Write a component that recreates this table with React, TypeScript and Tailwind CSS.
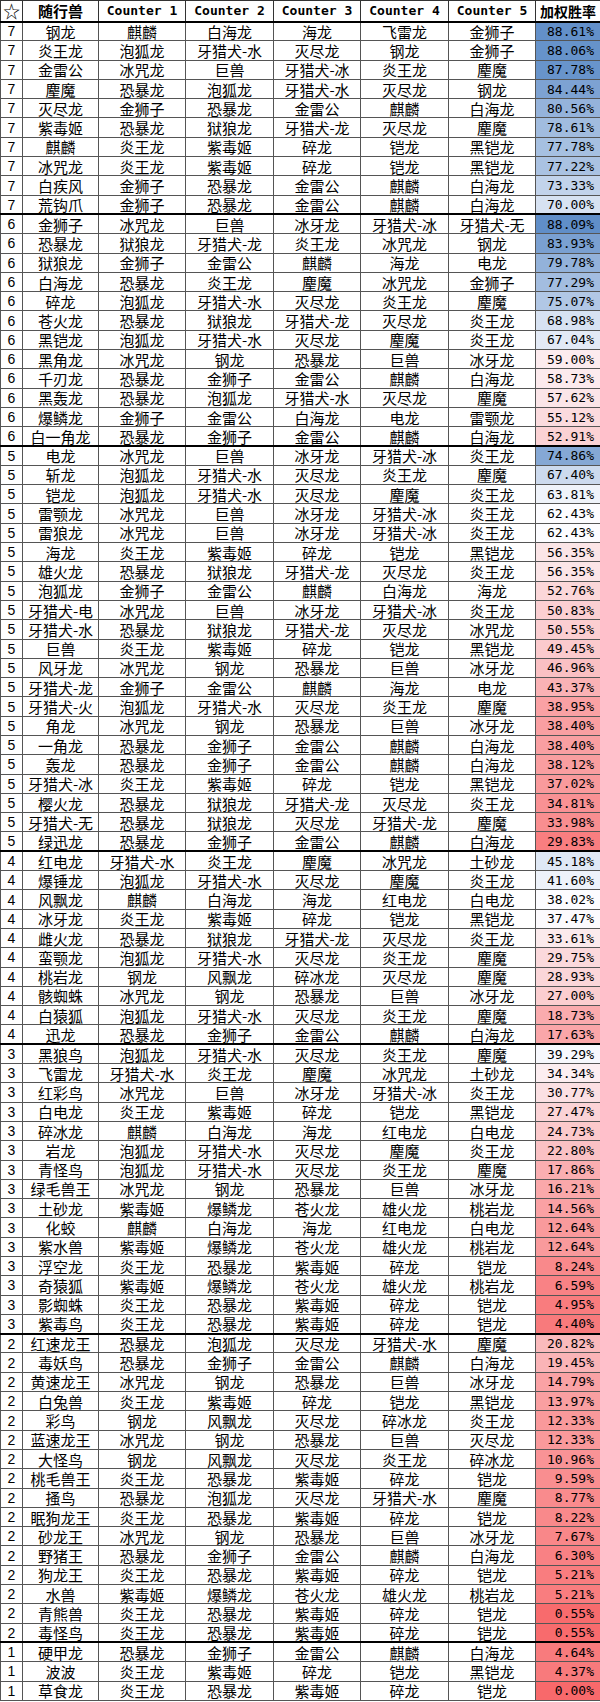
import React from 'react';

const raw = `7|钢龙|麒麟|白海龙|海龙|飞雷龙|金狮子|88.61
7|炎王龙|泡狐龙|牙猎犬-水|灭尽龙|钢龙|金狮子|88.06
7|金雷公|冰咒龙|巨兽|牙猎犬-冰|炎王龙|麈魔|87.78
7|麈魔|恐暴龙|泡狐龙|牙猎犬-水|灭尽龙|钢龙|84.44
7|灭尽龙|金狮子|恐暴龙|金雷公|麒麟|白海龙|80.56
7|紫毒姬|恐暴龙|狱狼龙|牙猎犬-龙|灭尽龙|麈魔|78.61
7|麒麟|炎王龙|紫毒姬|碎龙|铠龙|黑铠龙|77.78
7|冰咒龙|炎王龙|紫毒姬|碎龙|铠龙|黑铠龙|77.22
7|白疾风|金狮子|恐暴龙|金雷公|麒麟|白海龙|73.33
7|荒钩爪|金狮子|恐暴龙|金雷公|麒麟|白海龙|70.00
6|金狮子|冰咒龙|巨兽|冰牙龙|牙猎犬-冰|牙猎犬-无|88.09
6|恐暴龙|狱狼龙|牙猎犬-龙|炎王龙|冰咒龙|钢龙|83.93
6|狱狼龙|金狮子|金雷公|麒麟|海龙|电龙|79.78
6|白海龙|恐暴龙|炎王龙|麈魔|冰咒龙|金狮子|77.29
6|碎龙|泡狐龙|牙猎犬-水|灭尽龙|炎王龙|麈魔|75.07
6|苍火龙|恐暴龙|狱狼龙|牙猎犬-龙|灭尽龙|炎王龙|68.98
6|黑铠龙|泡狐龙|牙猎犬-水|灭尽龙|麈魔|炎王龙|67.04
6|黑角龙|冰咒龙|钢龙|恐暴龙|巨兽|冰牙龙|59.00
6|千刃龙|恐暴龙|金狮子|金雷公|麒麟|白海龙|58.73
6|黑轰龙|恐暴龙|泡狐龙|牙猎犬-水|灭尽龙|麈魔|57.62
6|爆鳞龙|金狮子|金雷公|白海龙|电龙|雷颚龙|55.12
6|白一角龙|恐暴龙|金狮子|金雷公|麒麟|白海龙|52.91
5|电龙|冰咒龙|巨兽|冰牙龙|牙猎犬-冰|炎王龙|74.86
5|斩龙|泡狐龙|牙猎犬-水|灭尽龙|炎王龙|麈魔|67.40
5|铠龙|泡狐龙|牙猎犬-水|灭尽龙|麈魔|炎王龙|63.81
5|雷颚龙|冰咒龙|巨兽|冰牙龙|牙猎犬-冰|炎王龙|62.43
5|雷狼龙|冰咒龙|巨兽|冰牙龙|牙猎犬-冰|炎王龙|62.43
5|海龙|炎王龙|紫毒姬|碎龙|铠龙|黑铠龙|56.35
5|雄火龙|恐暴龙|狱狼龙|牙猎犬-龙|灭尽龙|炎王龙|56.35
5|泡狐龙|金狮子|金雷公|麒麟|白海龙|海龙|52.76
5|牙猎犬-电|冰咒龙|巨兽|冰牙龙|牙猎犬-冰|炎王龙|50.83
5|牙猎犬-水|恐暴龙|狱狼龙|牙猎犬-龙|灭尽龙|冰咒龙|50.55
5|巨兽|炎王龙|紫毒姬|碎龙|铠龙|黑铠龙|49.45
5|风牙龙|冰咒龙|钢龙|恐暴龙|巨兽|冰牙龙|46.96
5|牙猎犬-龙|金狮子|金雷公|麒麟|海龙|电龙|43.37
5|牙猎犬-火|泡狐龙|牙猎犬-水|灭尽龙|炎王龙|麈魔|38.95
5|角龙|冰咒龙|钢龙|恐暴龙|巨兽|冰牙龙|38.40
5|一角龙|恐暴龙|金狮子|金雷公|麒麟|白海龙|38.40
5|轰龙|恐暴龙|金狮子|金雷公|麒麟|白海龙|38.12
5|牙猎犬-冰|炎王龙|紫毒姬|碎龙|铠龙|黑铠龙|37.02
5|樱火龙|恐暴龙|狱狼龙|牙猎犬-龙|灭尽龙|炎王龙|34.81
5|牙猎犬-无|恐暴龙|狱狼龙|灭尽龙|牙猎犬-龙|麈魔|33.98
5|绿迅龙|恐暴龙|金狮子|金雷公|麒麟|白海龙|29.83
4|红电龙|牙猎犬-水|炎王龙|麈魔|冰咒龙|土砂龙|45.18
4|爆锤龙|泡狐龙|牙猎犬-水|灭尽龙|麈魔|炎王龙|41.60
4|风飘龙|麒麟|白海龙|海龙|红电龙|白电龙|38.02
4|冰牙龙|炎王龙|紫毒姬|碎龙|铠龙|黑铠龙|37.47
4|雌火龙|恐暴龙|狱狼龙|牙猎犬-龙|灭尽龙|炎王龙|33.61
4|蛮颚龙|泡狐龙|牙猎犬-水|灭尽龙|炎王龙|麈魔|29.75
4|桃岩龙|钢龙|风飘龙|碎冰龙|灭尽龙|麈魔|28.93
4|骸蜘蛛|冰咒龙|钢龙|恐暴龙|巨兽|冰牙龙|27.00
4|白猿狐|泡狐龙|牙猎犬-水|灭尽龙|炎王龙|麈魔|18.73
4|迅龙|恐暴龙|金狮子|金雷公|麒麟|白海龙|17.63
3|黑狼鸟|泡狐龙|牙猎犬-水|灭尽龙|炎王龙|麈魔|39.29
3|飞雷龙|牙猎犬-水|炎王龙|麈魔|冰咒龙|土砂龙|34.34
3|红彩鸟|冰咒龙|巨兽|冰牙龙|牙猎犬-冰|炎王龙|30.77
3|白电龙|炎王龙|紫毒姬|碎龙|铠龙|黑铠龙|27.47
3|碎冰龙|麒麟|白海龙|海龙|红电龙|白电龙|24.73
3|岩龙|泡狐龙|牙猎犬-水|灭尽龙|麈魔|炎王龙|22.80
3|青怪鸟|泡狐龙|牙猎犬-水|灭尽龙|炎王龙|麈魔|17.86
3|绿毛兽王|冰咒龙|钢龙|恐暴龙|巨兽|冰牙龙|16.21
3|土砂龙|紫毒姬|爆鳞龙|苍火龙|雄火龙|桃岩龙|14.56
3|化蛟|麒麟|白海龙|海龙|红电龙|白电龙|12.64
3|紫水兽|紫毒姬|爆鳞龙|苍火龙|雄火龙|桃岩龙|12.64
3|浮空龙|炎王龙|恐暴龙|紫毒姬|碎龙|铠龙|8.24
3|奇猿狐|紫毒姬|爆鳞龙|苍火龙|雄火龙|桃岩龙|6.59
3|影蜘蛛|炎王龙|恐暴龙|紫毒姬|碎龙|铠龙|4.95
3|紫毒鸟|炎王龙|恐暴龙|紫毒姬|碎龙|铠龙|4.40
2|红速龙王|恐暴龙|泡狐龙|灭尽龙|牙猎犬-水|麈魔|20.82
2|毒妖鸟|恐暴龙|金狮子|金雷公|麒麟|白海龙|19.45
2|黄速龙王|冰咒龙|钢龙|恐暴龙|巨兽|冰牙龙|14.79
2|白兔兽|炎王龙|紫毒姬|碎龙|铠龙|黑铠龙|13.97
2|彩鸟|钢龙|风飘龙|灭尽龙|碎冰龙|炎王龙|12.33
2|蓝速龙王|冰咒龙|钢龙|恐暴龙|巨兽|灭尽龙|12.33
2|大怪鸟|钢龙|风飘龙|灭尽龙|炎王龙|碎冰龙|10.96
2|桃毛兽王|炎王龙|恐暴龙|紫毒姬|碎龙|铠龙|9.59
2|搔鸟|恐暴龙|泡狐龙|灭尽龙|牙猎犬-水|麈魔|8.77
2|眠狗龙王|炎王龙|恐暴龙|紫毒姬|碎龙|铠龙|8.22
2|砂龙王|冰咒龙|钢龙|恐暴龙|巨兽|冰牙龙|7.67
2|野猪王|恐暴龙|金狮子|金雷公|麒麟|白海龙|6.30
2|狗龙王|炎王龙|恐暴龙|紫毒姬|碎龙|铠龙|5.21
2|水兽|紫毒姬|爆鳞龙|苍火龙|雄火龙|桃岩龙|5.21
2|青熊兽|炎王龙|恐暴龙|紫毒姬|碎龙|铠龙|0.55
2|毒怪鸟|炎王龙|恐暴龙|紫毒姬|碎龙|铠龙|0.55
1|硬甲龙|恐暴龙|金狮子|金雷公|麒麟|白海龙|4.64
1|波波|炎王龙|紫毒姬|碎龙|铠龙|黑铠龙|4.37
1|草食龙|炎王龙|恐暴龙|紫毒姬|碎龙|铠龙|0.00`;

const rows = raw.split('\n').map(l => l.split('|'));

// white point, and how far above / below it the colour saturates, per star level
const scale: Record<string, [number, number, number]> = {
    '7': [64, 26, 30],
    '6': [63, 26, 35],
    '5': [62.4, 17, 38],
    '4': [38, 40, 35],
    '3': [38, 40, 38],
    '2': [38, 40, 38],
    '1': [38, 40, 38],
};

const mix = (a: number[], b: number[], t: number) =>
    `rgb(${a.map((v, i) => Math.round(v + (b[i] - v) * t)).join(',')})`;

const cellColor = (star: string, value: number) => {
    const [mid, up, down] = scale[star];
    const white = [252, 252, 255];
    if (value >= mid) return mix(white, [90, 138, 198], Math.min(1, (value - mid) / up));
    return mix(white, [248, 105, 107], Math.min(1, (mid - value) / down));
};

const cjk = "font-['Noto_Sans_CJK_SC',sans-serif]";

export default function App() {
    return (
        <div className="w-[600px] bg-white text-black">
            <table className="w-[600px] table-fixed border-collapse">
                <colgroup>
                    <col className="w-[22px]" />
                    <col className="w-[76px]" />
                    <col className="w-[87px]" />
                    <col className="w-[88px]" />
                    <col className="w-[87px]" />
                    <col className="w-[88px]" />
                    <col className="w-[87px]" />
                    <col className="w-[65px]" />
                </colgroup>
                <thead>
                    <tr className="h-[21px] text-[13px] font-bold leading-none">
                        <th className={`border border-[#333] p-0 text-[17px] font-normal ${cjk}`}>☆</th>
                        <th className={`border border-[#333] p-0 text-[15px] ${cjk}`}>随行兽</th>
                        {[1, 2, 3, 4, 5].map(n => (
                            <th key={n} className="border border-[#333] p-0 font-['DejaVu_Sans_Mono',monospace] whitespace-nowrap">
                                Counter {n}
                            </th>
                        ))}
                        <th className={`border border-[#333] p-0 text-[14px] ${cjk}`}>加权胜率</th>
                    </tr>
                </thead>
                <tbody>
                    {rows.map((r, i) => {
                        const groupStart = i === 0 || rows[i - 1][0] !== r[0];
                        const top = groupStart ? 'border-t-2 border-t-black' : '';
                        return (
                            <tr key={i} className={`h-[19.3px] text-[15px] leading-none ${cjk}`}>
                                <td className={`border border-[#555] p-0 text-center text-[14px] font-['Liberation_Sans',sans-serif] ${top}`}>{r[0]}</td>
                                {r.slice(1, 7).map((c, j) => (
                                    <td key={j} className={`border border-[#555] p-0 text-center whitespace-nowrap ${top}`}>{c}</td>
                                ))}
                                <td
                                    className={`border border-[#555] p-0 pr-[6px] text-right text-[13px] font-['DejaVu_Sans_Mono',monospace] ${top}`}
                                    style={{ backgroundColor: cellColor(r[0], parseFloat(r[7])) }}
                                >
                                    {r[7]}%
                                </td>
                            </tr>
                        );
                    })}
                </tbody>
            </table>
        </div>
    );
}
